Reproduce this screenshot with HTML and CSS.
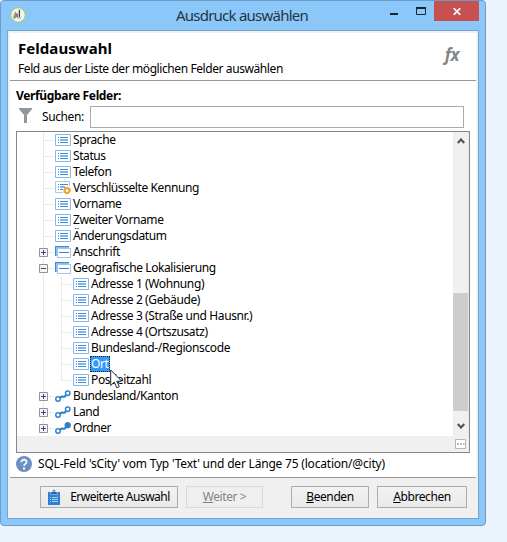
FILE: index.html
```html
<!DOCTYPE html>
<html lang="de">
<head>
<meta charset="utf-8">
<title>Ausdruck auswählen</title>
<link rel="stylesheet" href="styles.css">
</head>
<body>
<svg class="defs" width="0" height="0">
  <symbol id="field" viewBox="0 0 16 12"><path d="M.5.5h15v11H.5z" fill="#fff" stroke="#87b9e8"/><path d="M3 3h1v1H3zM5 3h8v1H5zM3 8h1v1H3zM5 8h8v1H5z" fill="#3c8edb"/><path d="M3 5h1v2H3zM5 5h8v2H5z" fill="#7cb5e8"/></symbol>
  <symbol id="key" viewBox="0 0 16 14"><path d="M8 11.5H.5V.5h14V5" fill="none" stroke="#a3c9ee"/><path d="M3 3h1v1H3zM5 3h8v1H5zM3 8h1v1H3zM5 8h3v1H5z" fill="#3c8edb"/><path d="M3 5h1v2H3zM5 5h5v2H5z" fill="#7cb5e8"/><circle cx="12" cy="9.5" r="2.4" fill="#fff" stroke="#f09a1e" stroke-width="1.6"/><circle cx="12" cy="9.5" r="3.4" fill="none" stroke="#f09a1e" stroke-dasharray="1.3 1.37"/></symbol>
  <symbol id="group" viewBox="0 0 16 12"><path d="M0 0h14v2H2v8H0z" fill="#8bbdea"/><path d="M0 0h14v1H1v9H0z" fill="#3c8edb"/><path d="M2.5 2.5h13v9h-13z" fill="#fff" stroke="#9bc5ed"/><path d="M4 6h10v1H4z" fill="#2f80d0"/></symbol>
  <symbol id="link" viewBox="0 0 16 12"><path d="M4.8 8l1.8-1.5 3 .2L11.500 4.500" fill="none" stroke="#2f80d0" stroke-width="2"/><circle cx="3" cy="9" r="2.2" fill="#fff" stroke="#2f80d0" stroke-width="1.500"/><circle cx="12.700" cy="3.300" r="2.200" fill="#fff" stroke="#2f80d0" stroke-width="1.500"/></symbol>
  <symbol id="linkfull" viewBox="0 0 16 12"><use href="#link" width="16" height="12"/><circle cx="12.700" cy="3.300" r="3" fill="#2f80d0"/></symbol>
  <symbol id="plus" viewBox="0 0 9 9"><path d="M.5.5h8v8h-8z" fill="#f4f4f4" stroke="#919191"/><path d="M2 4h5v1H2zM4 2h1v5H4z" fill="#34498c"/></symbol>
  <symbol id="minus" viewBox="0 0 9 9"><path d="M.5.5h8v8h-8z" fill="#f4f4f4" stroke="#919191"/><path d="M2 4h5v1H2z" fill="#34498c"/></symbol>
</svg>
<div class="window">
  <header class="titlebar">
    <svg class="app" width="16" height="16" viewBox="0 0 17 17"><circle cx="8.500" cy="8.500" r="7.700" fill="#f3f4ee" stroke="#a5c95b"/><path d="M3.500 7l3-2.500v7l-3 1.500z" fill="#c3c5bd"/><path d="M6 5.500v6M4.500 9v3.500" stroke="#83877e" stroke-width="1.200"/><path d="M10 3v7.500M7.500 7v3.500" fill="none" stroke="#3c403a" stroke-width="1.300"/><path d="M7.500 11.500h4.500" stroke="#8c9187"/></svg>
    <h1><span>Ausdruck auswählen</span></h1>
    <svg class="min" width="8" height="2"><path d="M0 0h8v2H0z" fill="#1b2530"/></svg>
    <svg class="max" width="10" height="8"><path d="M.5 1h9v6.500h-9z" fill="none" stroke="#1b2530"/><path d="M0 0h10v2H0z" fill="#1b2530"/></svg>
    <div class="close"><svg width="8" height="7"><path d="M.7.200l6.600 6.600M7.300.200L.7 6.800" stroke="#fff" stroke-width="1.700"/></svg></div>
  </header>
  <main class="client">
    <section class="intro">
      <div><h2><span>Feldauswahl</span></h2><p><span>Feld aus der Liste der möglichen Felder auswählen</span></p></div>
      <b class="fx">fx</b>
    </section>
    <section class="body">
      <h3><span>Verfügbare Felder:</span></h3>
      <div class="search"><svg width="13" height="15"><path d="M0 0h13v1L8 7v8H5V7L0 1z" fill="#969696"/></svg><label>Suchen:</label><div class="input"></div></div>
      <div class="treebox">
        <div class="view">
          <div class="tree">
            <div class="row"><svg class="ic"><use href="#field"/></svg><span>Sprache</span></div>
            <div class="row"><svg class="ic"><use href="#field"/></svg><span>Status</span></div>
            <div class="row"><svg class="ic"><use href="#field"/></svg><span>Telefon</span></div>
            <div class="row"><svg class="ic key"><use href="#key"/></svg><span>Verschlüsselte Kennung</span></div>
            <div class="row"><svg class="ic"><use href="#field"/></svg><span>Vorname</span></div>
            <div class="row"><svg class="ic"><use href="#field"/></svg><span>Zweiter Vorname</span></div>
            <div class="row"><svg class="ic"><use href="#field"/></svg><span>Änderungsdatum</span></div>
            <div class="row"><svg class="box"><use href="#plus"/></svg><svg class="ic"><use href="#group"/></svg><span>Anschrift</span></div>
            <div class="row"><svg class="box"><use href="#minus"/></svg><svg class="ic"><use href="#group"/></svg><span>Geografische Lokalisierung</span></div>
            <div class="children">
              <div class="row"><svg class="ic"><use href="#field"/></svg><span>Adresse 1 (Wohnung)</span></div>
              <div class="row"><svg class="ic"><use href="#field"/></svg><span>Adresse 2 (Gebäude)</span></div>
              <div class="row"><svg class="ic"><use href="#field"/></svg><span>Adresse 3 (Straße und Hausnr.)</span></div>
              <div class="row"><svg class="ic"><use href="#field"/></svg><span>Adresse 4 (Ortszusatz)</span></div>
              <div class="row"><svg class="ic"><use href="#field"/></svg><span>Bundesland-/Regionscode</span></div>
              <div class="row"><svg class="ic"><use href="#field"/></svg><span class="selected">Ort</span></div>
              <div class="row last"><svg class="ic"><use href="#field"/></svg><span>Postleitzahl</span></div>
            </div>
            <div class="row"><svg class="box"><use href="#plus"/></svg><svg class="ic"><use href="#link"/></svg><span>Bundesland/Kanton</span></div>
            <div class="row"><svg class="box"><use href="#plus"/></svg><svg class="ic"><use href="#link"/></svg><span>Land</span></div>
            <div class="row last"><svg class="box"><use href="#plus"/></svg><svg class="ic"><use href="#linkfull"/></svg><span>Ordner</span></div>
          </div>
          <div class="scroll"><svg width="8" height="6"><path d="M.7 5L4 1.500 7.300 5" fill="none" stroke="#555" stroke-width="2.200"/></svg><i class="thumb"></i><svg width="8" height="6"><path d="M.7 1L4 4.500 7.300 1" fill="none" stroke="#555" stroke-width="2.200"/></svg></div>
        </div>
        <div class="bottom"><svg width="11" height="10"><path d="M.5.500h10v9H.500z" fill="#fff" stroke="#b5b5b5"/><path d="M2 5h2M5 5h2M8 5h1.500" stroke="#777"/></svg></div>
      </div>
      <div class="info"><svg width="16" height="16"><circle cx="8" cy="8" r="8" fill="#6c8fc5"/><path d="M5.300 6.200C5.300 2.800 10.800 3 10.600 6 10.500 7.800 8 8 8 10" fill="none" stroke="#fff" stroke-width="1.700"/><path d="M7 11.500h2v2H7z" fill="#fff"/></svg><span>SQL-Feld 'sCity' vom Typ 'Text' und der Länge 75 (location/@city)</span></div>
    </section>
    <footer>
      <button class="adv"><svg width="12" height="16"><path d="M0 3h12v13H0z" fill="#2f80d0"/><path d="M2.500 5.500V3h2a1.500 2.500 0 0 1 3 0h2v2.500z" fill="#285f9b" stroke="#dfeaf5" stroke-width=".5"/><path d="M5.500 2h1v1h-1z" fill="#fff"/><path d="M2 8.500h1M4 8.500h6M2 10.500h1M4 10.500h6M2 12.500h1M4 12.500h6" stroke="#a8d0f5"/></svg><span>Erweiterte Auswahl</span></button>
      <button class="next"><span><u>W</u>eiter &gt;</span></button>
      <button class="end"><span><u>B</u>eenden</span></button>
      <button class="cancel"><span><u>A</u>bbrechen</span></button>
    </footer>
  </main>
  <svg class="cursor" width="13" height="20"><path d="M.7 1v15.500l3.600-3.400 2.500 5.700 2.500-1.100-2.500-5.500h4.900z" fill="#fff" stroke="#222b3b"/></svg>
</div>
</body>
</html>
```
FILE: styles.css
```css
* { box-sizing: border-box; }
body { margin: 0; width: 507px; height: 542px; overflow: hidden; background: #ebf3fc; font: 12px/16px "Noto Sans", "Open Sans", sans-serif; color: #000; letter-spacing: -.41px; }
h1, h2, h3, p { margin: 0; }
svg { display: block; flex: none; }
span { white-space: nowrap; }
.defs { position: absolute; }
.window { position: relative; width: 486px; height: 526px; padding: 0 7px 7px 6px; border: 1px solid #6b9dcc; border-radius: 4px; background: #8cc7fa; }
.titlebar { height: 29px; display: flex; align-items: flex-start; padding-left: 3px; }
.app { margin-top: 6px; }
h1 { width: 364px; flex: none; margin-top: 4px; padding-left: 150px; font-size: 15px; line-height: 20px; font-weight: 400; color: #263442; letter-spacing: -.77px; }
.min { margin-top: 12px; }
.max { margin: 6px 0 0 18px; }
.close { width: 45px; flex: none; height: 20px; margin-left: 8px; background: #c75050; display: flex; align-items: center; justify-content: center; }
.client { width: 472px; height: 489px; border: 1px solid #73a5d3; background: #f0f0f0; padding: 2px; display: flex; flex-direction: column; }
.intro { height: 48px; background: #fff; border-bottom: 1px solid #979797; padding: 5px 17px 0 8px; display: flex; justify-content: space-between; }
h2 { font-size: 15px; line-height: 20px; letter-spacing: .05px; }
p { margin-top: 3px; }
.fx { margin-top: 7px; font: italic bold 17px/20px "Open Sans", sans-serif; color: #858585; letter-spacing: -.5px; }
.body { height: 397px; background: #fff; border-bottom: 1px solid #979797; padding: 7px 7px 0 6px; }
h3 { font-size: 12px; line-height: 16px; letter-spacing: -.34px; }
.search { height: 24px; margin-top: 1px; display: flex; align-items: center; }
.search > svg { margin: 0 0 3px 3px; }
.search label { width: 48px; margin-left: 10px; }
.input { width: 374px; height: 22px; border: 1px solid #aaabb0; }
.treebox { width: 454px; height: 322px; margin-top: 2px; border: 1px solid #828790; }
.view { height: 304px; display: flex; }
.tree { width: 436px; padding-left: 26px; }
.row { display: flex; align-items: center; height: 16px; padding-left: 12px; background: linear-gradient(#e9e9e9, #e9e9e9) 0 0 / 1px 100% no-repeat, linear-gradient(#e9e9e9, #e9e9e9) 0 8px / 11px 1px no-repeat; }
.row.last { background-size: 1px 8px, 11px 1px; }
.row > span { height: 16px; padding-left: 2px; }
.ic { width: 16px; height: 12px; }
.ic.key { height: 14px; }
.box { width: 9px; height: 9px; margin: 0 7px 0 -16px; }
.children { padding-left: 18px; background: linear-gradient(#e9e9e9, #e9e9e9) 0 0 / 1px 100% no-repeat; }
.row > .selected { width: 20px; height: 16px; margin-left: 1px; padding: 0 1px; background: #3399ff; color: #fff; outline: 1px dotted #222; outline-offset: -1px; }
.children .row > span { letter-spacing: -.38px; }
.scroll { width: 16px; background: #f0f0f0; border-right: 1px solid #e8e8e8; display: flex; flex-direction: column; align-items: center; padding: 6px 0; }
.thumb { width: 15px; height: 118px; background: #cdcdcd; margin: 149px 0 12px; }
.bottom { height: 16px; background: #f0f0f0; display: flex; justify-content: flex-end; align-items: center; padding-right: 3px; }
.info { display: flex; margin-top: 3px; }
.info span { margin-left: 6px; letter-spacing: -.2px; }
footer { flex: 1; display: flex; padding: 8px 0 0 30px; align-items: flex-start; }
button { height: 22px; padding: 0; border: 1px solid #acacac; background: linear-gradient(#f2f2f2, #e9e9e9); font: inherit; letter-spacing: inherit; color: #000; display: flex; align-items: center; justify-content: center; }
.adv { width: 138px; letter-spacing: -.5px; }
.adv svg { margin-right: 10px; }
.next { width: 77px; margin-left: 8px; border-color: #d9d9d9; background: #efefef; color: #838383; }
.end { width: 78px; margin-left: 28px; }
.cancel { width: 90px; margin-left: 8px; }
.cursor { position: absolute; left: 109px; top: 368px; }
```
